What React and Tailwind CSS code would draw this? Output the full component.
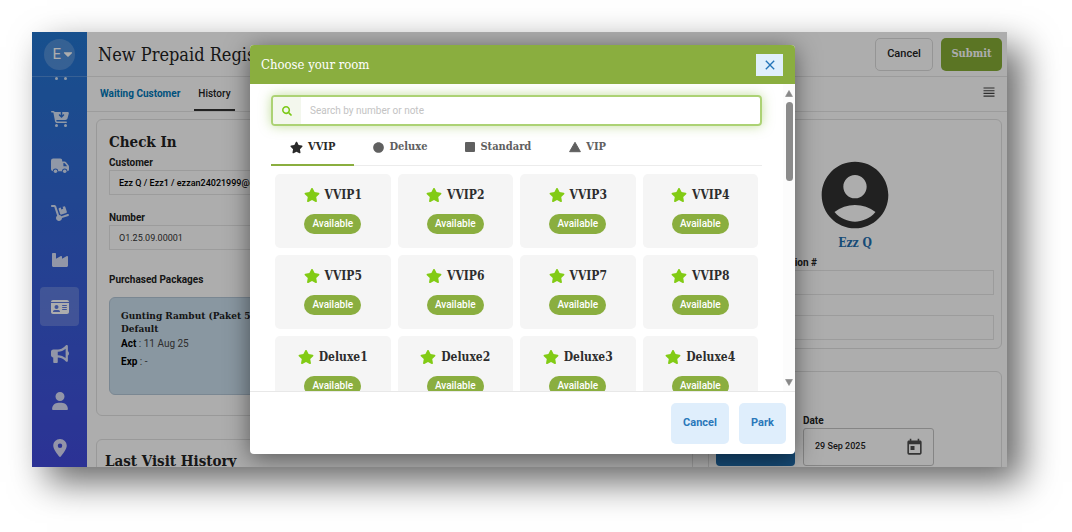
import React, { useState } from 'react';
import {
  FaBullhorn,
  FaCartArrowDown,
  FaCartShopping,
  FaDolly,
  FaIdCard,
  FaIndustry,
  FaLocationDot,
  FaUser,
} from 'react-icons/fa6';
import { FaCaretDown, FaSearch, FaStar, FaCircle } from 'react-icons/fa';
import { MdAccountCircle, MdClose, MdToday } from 'react-icons/md';

const Truck = ({ className }) => (
  <svg viewBox="0 0 18 18" className={className} fill="currentColor" aria-hidden="true">
    <path
      fillRule="evenodd"
      d="M2.2 1.5H9.2A2 2 0 0 1 11.2 3.5V4.5H13.4C14.2 4.5 14.8 4.8 15.3 5.4L17.3 7.9C17.7 8.4 18 9 18 9.7V12.4A1.8 1.8 0 0 1 16.4 14.2A2.7 2.7 0 0 0 11 14.2H7.2A2.7 2.7 0 0 0 1.8 14.2A2 2 0 0 1 0 12.3V3.7A2.2 2.2 0 0 1 2.2 1.5ZM12.4 6V9.3H16.2L14 6.4Q13.7 6 13.2 6Z"
    />
    <circle cx="4.5" cy="14.3" r="1.8" />
    <circle cx="13.7" cy="14.3" r="1.8" />
  </svg>
);

const Triangle = ({ className }) => (
  <svg viewBox="0 0 12 11" className={className} fill="currentColor" aria-hidden="true">
    <path d="M6 .8 11.4 10.2H.6Z" stroke="currentColor" strokeWidth="1" strokeLinejoin="round" />
  </svg>
);

const Square = ({ className }) => (
  <svg viewBox="0 0 10 10" className={className} fill="currentColor" aria-hidden="true">
    <rect width="10" height="10" rx="1" />
  </svg>
);

const NAV_ITEMS = [
  { name: 'Sales', icon: FaCartShopping },
  { name: 'Purchases', icon: FaCartArrowDown },
  { name: 'Delivery', icon: Truck },
  { name: 'Stock', icon: FaDolly },
  { name: 'Production', icon: FaIndustry },
  { name: 'Membership', icon: FaIdCard },
  { name: 'Marketing', icon: FaBullhorn },
  { name: 'Users', icon: FaUser },
  { name: 'Locations', icon: FaLocationDot },
];

const ROOM_TYPES = [
  { name: 'VVIP', icon: FaStar, iconClass: 'size-[13px]' },
  { name: 'Deluxe', icon: FaCircle, iconClass: 'size-[11px]' },
  { name: 'Standard', icon: Square, iconClass: 'size-[10px]' },
  { name: 'VIP', icon: Triangle, iconClass: 'size-3' },
];

const ROOMS = [
  'VVIP1', 'VVIP2', 'VVIP3', 'VVIP4',
  'VVIP5', 'VVIP6', 'VVIP7', 'VVIP8',
  'Deluxe1', 'Deluxe2', 'Deluxe3', 'Deluxe4',
];

const SLAB = "font-['Roboto_Slab','DejaVu_Serif_Condensed','DejaVu_Serif',serif]";

const Sidebar = () => (
  <aside className="flex w-[55px] shrink-0 flex-col overflow-hidden bg-linear-to-b from-[#2276d0] to-[#414adc]">
    <div className="flex h-[45px] shrink-0 items-center justify-center border-b border-white/20">
      <button
        aria-label="Account"
        className="flex size-[31px] items-center justify-end rounded-full bg-white/20 text-[15px] text-white"
      >
        E
        <FaCaretDown className="size-[14px] shrink-0" />
      </button>
    </div>
    <div className="min-h-0 flex-1 overflow-hidden">
      <nav className="-mt-[25px] flex flex-col items-center gap-2">
        {NAV_ITEMS.map(({ name, icon: Icon }) => (
          <a
            key={name}
            href="#"
            aria-label={name}
            className={`flex size-[39px] shrink-0 items-center justify-center rounded ${
              name === 'Membership' ? 'bg-white/20 text-white' : 'text-white/80'
            }`}
          >
            <Icon className="size-[18px]" />
          </a>
        ))}
      </nav>
    </div>
  </aside>
);

const Field = ({ id, label, value, className = '', labelClass = '', inputClass = '' }) => (
  <div className={className}>
    <label htmlFor={id} className={`block h-[13px] text-[10px] leading-3 font-bold ${labelClass}`}>
      {label}
    </label>
    <input
      id={id}
      readOnly
      value={value}
      className={`block h-[25px] w-full border border-[#e6e6e6] px-[9px] text-[9px] ${inputClass}`}
    />
  </div>
);

const CheckInCard = () => (
  <section className="h-[297px] shrink-0 rounded-md border border-[#e2e2e2] px-3 pt-3">
    <h2 className={`${SLAB} text-[15px] leading-5 font-bold`}>Check In</h2>
    <Field
      id="customer"
      label="Customer"
      value="Ezz Q / Ezz1 / ezzan24021999@gmail.com"
      className="mt-[5px]"
      inputClass="font-medium text-black"
    />
    <Field id="number" label="Number" value="O1.25.09.00001" className="mt-[17px]" inputClass="text-[#333]" />
    <h3 className="mt-6 text-[10px] leading-3 font-bold">Purchased Packages</h3>
    <div className="mt-[11px] h-[98px] w-[220px] rounded-md border border-[#b4c8d8] bg-[#cbdfee] px-[11px] py-[11px]">
      <h4 className={`${SLAB} text-[10px] leading-[13px] font-bold`}>
        Gunting Rambut (Paket 5x)
        <br />
        Default
      </h4>
      <p className="text-[10px] leading-[18px] text-[#444]">
        <b className="text-black">Act</b> : 11 Aug 25
      </p>
      <p className="text-[10px] leading-[18px] text-[#444]">
        <b className="text-black">Exp</b> : -
      </p>
    </div>
  </section>
);

const ProfileCard = () => (
  <section className="h-[230px] shrink-0 rounded-md border border-[#e2e2e2] px-[7px] pt-[35px]">
    <MdAccountCircle className="mx-auto size-[80px] text-[#323232]" />
    <p className={`${SLAB} text-center text-[12px] leading-4 font-bold text-[#1f6fb0]`}>Ezz Q</p>
    <Field id="identification" label="Identification #" value="" className="mt-[6px]" labelClass="pl-[33px]" />
    <input aria-label="Note" readOnly value="" className="mt-5 block h-[25px] w-full border border-[#e6e6e6]" />
  </section>
);

const ScheduleCard = () => (
  <section className="min-h-[130px] flex-1 shrink-0 rounded-md border border-[#e2e2e2] px-[7px] pt-[43px]">
    <div className="flex items-end gap-2">
      <button aria-label="Schedule" className="h-[38px] w-[79px] rounded-sm bg-[#1f6cab]" />
      <div className="w-[131px]">
        <label htmlFor="date" className="block h-[13px] text-[10px] leading-3 font-bold">
          Date
        </label>
        <div className="flex h-[38px] items-center justify-between rounded-[3px] border border-[#c4c4c4] pr-[9px] pl-[11px]">
          <input id="date" readOnly value="29 Sep 2025" className="w-full min-w-0 text-[9px] font-medium" />
          <MdToday className="size-[19px] shrink-0 text-[#4d4d4d]" />
        </div>
      </div>
    </div>
  </section>
);

const RegistrationPage = () => (
  <main className="flex min-w-0 flex-1 flex-col overflow-hidden bg-white text-[#222]">
    <header className="flex h-[45px] shrink-0 items-center justify-between border-b border-[#e6e6e6] pr-[5px] pl-[11px]">
      <h1 className={`${SLAB} text-[18px] whitespace-nowrap`}>New Prepaid Registration</h1>
      <div className="flex gap-2">
        <button className="h-[33px] w-[58px] rounded-[5px] border border-[#dcdcdc] text-[11px] font-medium">Cancel</button>
        <button className={`${SLAB} h-[33px] w-[61px] rounded-[5px] bg-[#86ad36] text-[11px] font-bold text-white`}>
          Submit
        </button>
      </div>
    </header>
    <div className="flex h-[35px] shrink-0 items-center justify-between border-b border-[#e6e6e6] pr-3 pl-[9px]">
      <nav className="flex h-full text-[10px] leading-[33px] font-bold">
        <a href="#" className="px-1 text-[#0078b8]">
          Waiting Customer
        </a>
        <a href="#" className="ml-[10px] border-b-2 border-[#333] px-1 font-medium">
          History
        </a>
      </nav>
      <button aria-label="Menu" className="pb-[5px]">
        <svg viewBox="0 0 12 10" className="h-[10px] w-3" fill="none" stroke="#444" strokeWidth="1.1">
          <path d="M.5 1H11.5M.5 3.7H11.5M.5 6.4H11.5M.5 9.1H11.5" />
        </svg>
      </button>
    </div>
    <div className="flex min-h-0 flex-1 gap-[15px] overflow-hidden pt-[7px] pr-[5px] pl-[9px]">
      <div className="flex min-w-0 flex-1 flex-col gap-[23px]">
        <CheckInCard />
        <section className="h-[200px] shrink-0 rounded-md border border-[#e2e2e2] px-2 pt-[11px]">
          <h2 className={`${SLAB} text-[15px] leading-5 font-bold`}>Last Visit History</h2>
        </section>
      </div>
      <div className="flex w-[294px] shrink-0 flex-col gap-[22px]">
        <ProfileCard />
        <ScheduleCard />
      </div>
    </div>
  </main>
);

const RoomCard = ({ name }) => (
  <button className="flex h-[74px] flex-col items-center rounded-[5px] bg-[#f5f5f5] pt-[13px]">
    <span className={`${SLAB} flex h-4 items-center gap-[5px] text-[12px] font-bold text-[#2d2d2d]`}>
      <FaStar className="size-4 text-[#82cb15]" />
      {name}
    </span>
    <span className="mt-[11px] rounded-full bg-[#8aae3f] px-2 text-[10px] leading-5 font-medium text-white">Available</span>
  </button>
);

const RoomDialog = () => {
  const [type, setType] = useState('VVIP');

  return (
    <div
      role="dialog"
      aria-label="Choose your room"
      className="flex h-full w-full max-w-[545px] flex-col overflow-hidden rounded bg-white shadow-[0_4px_24px_rgba(0,0,0,0.5)]"
    >
      <div className="flex h-[39px] shrink-0 items-center justify-between bg-[#8aae3f] pr-3 pl-[11px]">
        <h2 className={`${SLAB} text-[13px] text-white`}>Choose your room</h2>
        <button aria-label="Close" className="flex h-[22px] w-[27px] items-center justify-center bg-[#e0effc] text-[#2474b8]">
          <MdClose className="size-4" />
        </button>
      </div>

      <div className="flex min-h-0 flex-1">
        <div className="min-w-0 flex-1 overflow-hidden px-[21px] pt-[11px]">
          <div className="flex h-[31px] overflow-hidden rounded border-2 border-[#acd274] shadow-[0_0_12px_rgba(138,190,63,0.5)]">
            <label htmlFor="search" className="flex w-7 shrink-0 items-center justify-center bg-[#f3f7ed]">
              <FaSearch className="size-[10px] text-[#7cc918]" />
            </label>
            <input
              id="search"
              placeholder="Search by number or note"
              className="min-w-0 flex-1 px-[9px] text-[10px] outline-none placeholder:text-[#c3c3c3]"
            />
          </div>

          <div role="tablist" className="mt-1 flex h-9 border-b border-[#ececec]">
            {ROOM_TYPES.map(({ name, icon: Icon, iconClass }) => (
              <button
                key={name}
                role="tab"
                aria-selected={type === name}
                onClick={() => setType(name)}
                className={`${SLAB} -mb-px flex items-center gap-[5px] border-b-2 px-[19px] text-[11px] font-bold ${
                  type === name ? 'border-[#8aae3f] text-[#2a2a2a]' : 'border-transparent text-[#606060]'
                }`}
              >
                <Icon className={iconClass} />
                {name}
              </button>
            ))}
          </div>

          <div className="mt-2 grid grid-cols-4 gap-[7px] px-1">
            {ROOMS.map((room) => (
              <RoomCard key={room} name={room} />
            ))}
          </div>
        </div>

        {/* scroll track */}
        <div className="flex w-3 shrink-0 flex-col items-center bg-[#fcfcfc] pt-[6px] pb-[5px] text-[#888]">
          <Triangle className="h-[7px] w-2" />
          <div className="mt-[5px] h-[79px] w-[7px] rounded-full bg-[#8b8b8b]" />
          <Triangle className="mt-auto h-[7px] w-2 rotate-180" />
        </div>
      </div>

      <div className="flex h-[63px] shrink-0 items-center justify-end gap-[10px] border-t border-[#e8e8e8] pr-[9px] text-[11px] font-bold text-[#2b78ba]">
        <button className="h-[41px] w-[58px] rounded-[5px] bg-[#dfeefc]">Cancel</button>
        <button className="h-[41px] w-[47px] rounded-[5px] bg-[#dfeefc]">Park</button>
      </div>
    </div>
  );
};

const App = () => {
  return (
    <div className="h-screen overflow-hidden bg-white pt-8 pr-[65px] pb-[65px] pl-8 font-[Roboto,'Liberation_Sans',sans-serif]">
      <div className="relative flex h-full overflow-hidden shadow-[15px_15px_34px_rgba(0,0,0,0.6)]">
        <Sidebar />
        <RegistrationPage />
        <div className="absolute inset-0 flex justify-center bg-black/32 py-[13px] pl-[6px]">
          <RoomDialog />
        </div>
      </div>
    </div>
  );
};

export default App;
